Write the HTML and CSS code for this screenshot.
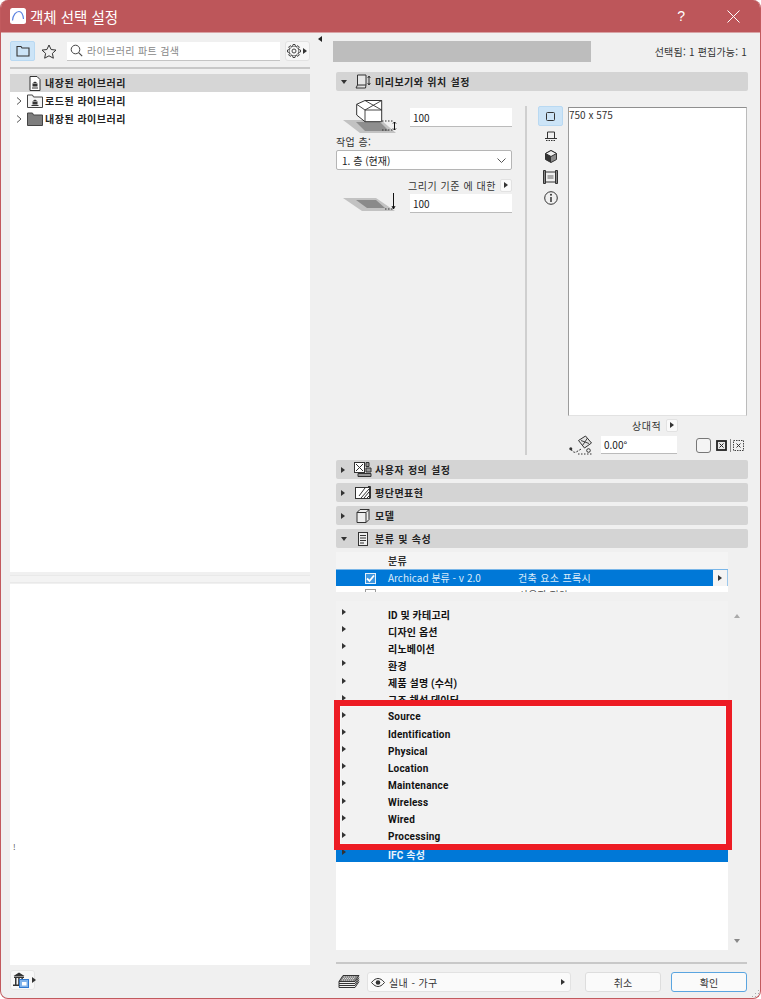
FILE: index.html
```html
<!DOCTYPE html>
<html lang="ko">
<head>
<meta charset="utf-8">
<title>객체 선택 설정</title>
<link rel="stylesheet" href="styles.css">
</head>
<body>
<div class="window">
  <header class="titlebar">
    <svg class="app-icon" width="16" height="16" viewBox="0 0 16 16"><rect width="16" height="16" rx="2.5" fill="#fff"/><path d="M2.500 12.500C3 7 6 3.500 9 3.500c2.500 0 4 3 4.500 7.500" fill="none" stroke="#5b82e0" stroke-width="1.200"/></svg>
    <span class="title">객체 선택 설정</span>
    <span class="help">?</span>
    <svg class="close" width="13" height="13" viewBox="0 0 13 13"><path d="M.5.500l12 12M12.500.500l-12 12" stroke="#fff" stroke-width="1"/></svg>
  </header>
  <i class="tri-left"></i>
  <div class="main">
    <aside class="left">
      <div class="toolbar">
        <span class="tool active">
          <svg width="14" height="12" viewBox="0 0 14 12"><path d="M1 1.500h4l1 1.500h7v8H1z" fill="none" stroke="#333" stroke-width="1.100"/></svg>
        </span>
        <span class="tool">
          <svg width="16" height="15" viewBox="0 0 16 15"><path d="M8 1l2.100 4.500 4.900.600-3.600 3.300.950 4.800L8 11.800l-4.350 2.400.950-4.800L1 6.100l4.900-.600z" fill="none" stroke="#333" stroke-width="1"/></svg>
        </span>
        <div class="search">
          <svg width="13" height="13" viewBox="0 0 13 13"><circle cx="5.500" cy="5.500" r="4.300" fill="none" stroke="#444" stroke-width="1"/><path d="M8.600 8.600l3.600 3.600" stroke="#444" stroke-width="1.100"/></svg>
          <span>라이브러리 파트 검색</span>
        </div>
        <span class="gear">
          <svg width="14" height="14" viewBox="-7 -7 14 14">
            <defs><path id="tooth" d="M-1.400-4.800L-1-6.500H1L1.400-4.800" fill="#f7f7f7" stroke="#333" stroke-width=".9"/></defs>
            <circle r="4.900" fill="#f7f7f7" stroke="#333" stroke-width=".9"/>
            <use href="#tooth"/><use href="#tooth" transform="rotate(45)"/><use href="#tooth" transform="rotate(90)"/><use href="#tooth" transform="rotate(135)"/><use href="#tooth" transform="rotate(180)"/><use href="#tooth" transform="rotate(225)"/><use href="#tooth" transform="rotate(270)"/><use href="#tooth" transform="rotate(315)"/>
            <circle r="2" fill="none" stroke="#333" stroke-width=".9"/>
          </svg>
          <i class="tri-right"></i>
        </span>
      </div>
      <div class="rule"></div>
      <div class="tree">
        <div class="tree-row selected">
          <span class="twist"></span>
          <svg width="12" height="15" viewBox="0 0 12 15"><path d="M1 .500h7l3 3v11H1z" fill="#fff" stroke="#333"/><path d="M3 11.500h6v1H3zM3.500 8h5v2.500h-5zM6 5.500l3 2H3z" fill="#333"/></svg>
          <span>내장된 라이브러리</span>
        </div>
        <div class="tree-row">
          <span class="twist"><svg width="6" height="8" viewBox="0 0 6 8"><path d="M1 .500L5 4 1 7.500" fill="none" stroke="#555"/></svg></span>
          <svg width="16" height="14" viewBox="0 0 16 14"><path d="M.500 1h5l1 2h9v10.500H.500z" fill="#f4f4f4" stroke="#444"/><path d="M4.500 11h7v1h-7zM5.500 8h5v2.500h-5zM8 5.500l3 2H5z" fill="#333"/></svg>
          <span>로드된 라이브러리</span>
        </div>
        <div class="tree-row">
          <span class="twist"><svg width="6" height="8" viewBox="0 0 6 8"><path d="M1 .500L5 4 1 7.500" fill="none" stroke="#555"/></svg></span>
          <svg width="16" height="14" viewBox="0 0 16 14"><path d="M.500 1h5l1 2h9v10.500H.500z" fill="#7e7e7e" stroke="#444"/></svg>
          <span>내장된 라이브러리</span>
        </div>
      </div>
      <div class="splitter"></div>
      <div class="lower-panel"><span class="stray">!</span></div>
      <div class="lib-bar">
        <span class="lib-button">
          <svg width="18" height="16" viewBox="0 0 18 16"><path d="M1 12.500h12V14H1zM2 4.500h10V6H2zM3 6h1.500v6.500H3zM6.200 6h1.500v6.500H6.200zM9.400 6h1.500v6.500H9.400zM7 .500l5.500 3.500h-11z" fill="#333"/><rect x="7.500" y="7.500" width="9" height="8" fill="#7fb2ea" stroke="#2f78d0"/><rect x="10" y="10" width="4.500" height="3.500" fill="#fff"/></svg>
          <i class="tri-right dark"></i>
        </span>
      </div>
    </aside>
    <section class="right">
      <div class="right-top">
        <div class="name-bar"></div>
        <span class="counts">선택됨: 1 편집가능: 1</span>
      </div>
      <div class="sec-head first">
        <i class="tri-down"></i>
        <svg width="16" height="15" viewBox="0 0 16 15"><path d="M2.500 1h8.500v10H2.500zM1 14l1.500-3M1 14h9.500l.5-3" fill="#e6e6e6" stroke="#333"/><path d="M14 2.500v8M12.700 4L14 2l1.300 2M12.700 9L14 11l1.300-2" fill="none" stroke="#333"/></svg>
        <span>미리보기와 위치 설정</span>
      </div>
      <div class="preview">
        <div class="settings">
          <div class="field-row first-row">
            <svg class="plan" width="56" height="34" viewBox="0 0 56 34"><path d="M0 20h38l15 13H17z" fill="#c2c2c2"/><path d="M13 22h24l9 9H22z" fill="#8e8e8e"/><path d="M13.700 4.300L22 .500h16.700v21.200H22L13.700 15z" fill="#fff" stroke="#333"/><path d="M13.700 4.300L22 10h16.700M22 10v11.700M38.700.500L22 10M22 .500l16.700 9.500" fill="none" stroke="#333" stroke-width=".9"/><path d="M39 21h12M39 30h12" fill="none" stroke="#333" stroke-dasharray="1.500 1.500"/><path d="M51.500 22v8M50 23.500l1.500-1.500 1.500 1.500M50 28.500l1.500 1.500 1.500-1.500" fill="none" stroke="#111"/></svg>
            <div class="input">100</div>
          </div>
          <div class="label">작업 층:</div>
          <div class="select"><span>1. 층 (현재)</span><svg width="9" height="5" viewBox="0 0 9 5"><path d="M.500.500L4.500 4.500 8.500.500" fill="none" stroke="#555"/></svg></div>
          <div class="label-right"><span>그리기 기준 에 대한</span><span class="mini-btn"><i class="tri-right dark"></i></span></div>
          <div class="field-row second-row">
            <svg class="plan" width="56" height="20" viewBox="0 0 56 20"><path d="M0 5h33l19 13H19z" fill="#c2c2c2"/><path d="M13 7h20l9 8H24z" fill="#8a8a8a"/><path d="M42 16h8" stroke="#333" stroke-dasharray="1.500 1.500"/><path d="M50.500 0v15M49 13l1.500 3 1.500-3" fill="none" stroke="#111"/></svg>
            <div class="input">100</div>
          </div>
        </div>
        <div class="v-rule"></div>
        <div class="view-tabs">
          <span class="view-tab active"><svg width="9" height="9" viewBox="0 0 9 9"><rect x=".5" y=".5" width="8" height="8" rx="1" fill="none" stroke="#333"/></svg></span>
          <span class="view-tab"><svg width="12" height="12" viewBox="0 0 12 12"><path d="M2.500 8V2h7v6M0 8.500h12" fill="none" stroke="#333"/><path d="M1 10.500h10" stroke="#333" stroke-dasharray="1.500 1"/></svg></span>
          <span class="view-tab"><svg width="12" height="13" viewBox="0 0 12 13"><path d="M6 .500l5.500 3v6L6 12.500.500 9.500v-6z" fill="#8a8a8a" stroke="#333"/><path d="M6 .500l5.500 3L6 6.500.500 3.500z" fill="#eee" stroke="#333"/><path d="M.500 3.500L6 6.500v6L.500 9.500z" fill="#333"/></svg></span>
          <span class="view-tab"><svg width="15" height="14" viewBox="0 0 15 14"><path d="M.500.500h2v13h-2zM12.500.500h2v13h-2zM2.500 2h10M2.500 12h10" fill="#888" stroke="#333"/><rect x="4.500" y="5" width="6" height="4" fill="#aaa"/></svg></span>
          <span class="view-tab"><svg width="14" height="14" viewBox="0 0 14 14"><circle cx="7" cy="7" r="6.300" fill="none" stroke="#333"/><path d="M7 6v5" stroke="#333" stroke-width="1.500"/><circle cx="7" cy="3.800" r="1" fill="#333"/></svg></span>
        </div>
        <div class="view-col">
          <div class="view-box">750 x 575</div>
          <div class="label-right relative"><span>상대적</span><span class="mini-btn"><i class="tri-right dark"></i></span></div>
          <div class="angle-row">
            <svg width="24" height="20" viewBox="0 0 24 20"><path d="M9.500 5.500L16.500 1l6 7-7 5z" fill="#e4e4e4" stroke="#333"/><path d="M12 5.500l8 3M18.500 3l-5 7.500" stroke="#333" stroke-width=".9"/><path d="M2 14.500c2 3 4 3.500 6 2l5-3" fill="none" stroke="#333" stroke-dasharray="2 1.300"/><circle cx="1.800" cy="13.800" r="1.500" fill="#333"/><path d="M9 19h14" stroke="#333" stroke-dasharray="1.500 1.500"/><circle cx="19.500" cy="15.500" r="1.800" fill="none" stroke="#333"/></svg>
            <div class="input angle">0.00°</div>
            <span class="check-empty"></span>
            <svg class="anchor" width="11" height="11" viewBox="0 0 11 11"><rect x="1" y="1" width="9" height="9" fill="#e8e8e8" stroke="#222" stroke-width="1.800"/><path d="M3.500 3.500l4 4M7.500 3.500l-4 4" stroke="#222"/></svg>
            <span class="bar"></span>
            <svg width="11" height="11" viewBox="0 0 11 11"><rect x=".5" y=".5" width="10" height="10" fill="none" stroke="#444" stroke-dasharray="1.500 1"/><path d="M3.500 3.500l4 4M7.500 3.500l-4 4" stroke="#333"/></svg>
          </div>
        </div>
      </div>
      <div class="sec-head">
        <i class="tri-right dark"></i>
        <svg width="18" height="15" viewBox="0 0 18 15"><rect x=".5" y=".5" width="10" height="10" fill="#fff" stroke="#333"/><path d="M2 2l7 7M9 2l-7 7" stroke="#333"/><path d="M12 .500h3v4h-3zM12 6h5v4h-5zM4 11.500h13v3H4z" fill="#999" stroke="#333"/></svg>
        <span>사용자 정의 설정</span>
      </div>
      <div class="sec-head">
        <i class="tri-right dark"></i>
        <svg width="16" height="13" viewBox="0 0 16 13"><rect x=".5" y="1.500" width="14" height="11" fill="#fff" stroke="#333"/><path d="M6 12l8-9M9 12l5-6M12 12l2-2M4 10l6-8" stroke="#333"/><path d="M13 .500h2.500v12" fill="none" stroke="#333"/></svg>
        <span>평단면표현</span>
      </div>
      <div class="sec-head">
        <i class="tri-right dark"></i>
        <svg width="14" height="14" viewBox="0 0 14 14"><path d="M1 3.500l3-3h9v10l-3 3H1zM1 3.500h9v10M10 3.500l3-3" fill="#eee" stroke="#333"/></svg>
        <span>모델</span>
      </div>
      <div class="sec-head">
        <i class="tri-down"></i>
        <svg width="10" height="14" viewBox="0 0 10 14"><rect x=".5" y=".5" width="9" height="13" fill="#eee" stroke="#333"/><path d="M2 3.500h6M2 6h6M2 8.500h6M2 11h4" stroke="#333"/></svg>
        <span>분류 및 속성</span>
      </div>
      <div class="class-table">
        <div class="class-head">분류</div>
        <div class="class-row">
          <span class="checkbox"><svg width="11" height="11" viewBox="0 0 11 11"><rect x=".5" y=".5" width="10" height="10" fill="#3f97e0" stroke="#e6f1fb"/><path d="M2 5.500l2.500 2.500L9 2.500" fill="none" stroke="#fff" stroke-width="1.800"/></svg></span>
          <span class="class-name">Archicad 분류 - v 2.0</span>
          <span class="class-value">건축 요소 프록시</span>
          <span class="row-btn"><i class="tri-right dark"></i></span>
        </div>
        <div class="class-clip"><span class="box-clip"></span><span class="text-clip">사용자 정의</span></div>
      </div>
      <div class="prop-area">
        <div class="prop-list">
          <div class="prop-group">
            <div class="prop"><i class="tri-right dark"></i><span>ID 및 카테고리</span></div>
            <div class="prop"><i class="tri-right dark"></i><span>디자인 옵션</span></div>
            <div class="prop"><i class="tri-right dark"></i><span>리노베이션</span></div>
            <div class="prop"><i class="tri-right dark"></i><span>환경</span></div>
            <div class="prop"><i class="tri-right dark"></i><span>제품 설명 (수식)</span></div>
            <div class="prop"><i class="tri-right dark"></i><span>구조 해석 데이터</span></div>
            <div class="prop"><i class="tri-right dark"></i><span>Source</span></div>
            <div class="prop"><i class="tri-right dark"></i><span>Identification</span></div>
            <div class="prop"><i class="tri-right dark"></i><span>Physical</span></div>
            <div class="prop"><i class="tri-right dark"></i><span>Location</span></div>
            <div class="prop"><i class="tri-right dark"></i><span>Maintenance</span></div>
            <div class="prop"><i class="tri-right dark"></i><span>Wireless</span></div>
            <div class="prop"><i class="tri-right dark"></i><span>Wired</span></div>
            <div class="prop"><i class="tri-right dark"></i><span>Processing</span></div>
            <div class="prop current"><i class="tri-right dark"></i><span>IFC 속성</span></div>
          </div>
        </div>
        <div class="scroll">
          <i class="tri-up"></i>
          <i class="tri-down grey"></i>
        </div>
      </div>
      <div class="rule bottom-rule"></div>
      <div class="footer">
        <svg width="22" height="14" viewBox="0 0 22 14"><path d="M5 .500h16l-4 6H1z" fill="#888" stroke="#333"/><path d="M1 6.500v2l16 0 4-6M1 8.500v2h16l4-6M1 10.500v2h16l4-6" fill="none" stroke="#333"/><path d="M6 2h11M5 3.500h11M4 5h11" stroke="#ddd" stroke-dasharray="1 1"/></svg>
        <div class="layer-select">
          <svg width="14" height="9" viewBox="0 0 14 9"><path d="M.500 4.500C3 1.500 5 .500 7 .500s4 1 6.500 4C11 7.500 9 8.500 7 8.500s-4-1-6.500-4z" fill="none" stroke="#333"/><circle cx="7" cy="4.500" r="2.300" fill="#333"/></svg>
          <span>실내 - 가구</span>
          <i class="tri-right dark"></i>
        </div>
        <button class="btn">취소</button>
        <button class="btn primary">확인</button>
      </div>
    </section>
  </div>
  <div class="highlight"></div>
  <svg class="grip" width="10" height="10" viewBox="0 0 10 10"><path d="M8 2h1v1H8zM5 5h1v1H5zM8 5h1v1H8zM2 8h1v1H2zM5 8h1v1H5zM8 8h1v1H8z" fill="#aaa"/></svg>
</div>
</body>
</html>
```

FILE: styles.css
```css
* { box-sizing: border-box; }
html, body { margin: 0; padding: 0; background: #fff; }
body {
  width: 761px; height: 999px; overflow: hidden;
  font-family: "Noto Sans CJK KR", "Noto Sans", sans-serif;
  font-size: 10px; color: #222;
}
i { display: inline-block; flex: none; }
svg { flex: none; display: block; }

.window {
  position: relative; width: 761px; height: 999px;
  background: #f0f0f0; border: 1px solid #c25a5e; border-top: 0;
  border-radius: 8px; overflow: hidden;
}
.titlebar {
  height: 33px; background: #bd565a; color: #fff;
  display: flex; align-items: center; padding: 0 20px 0 9px;
  border-bottom: 1px solid #d9a3a5;
}
.title { font-size: 14.500px; margin-left: 4px; flex: 1; }
.help { font-size: 14px; margin-right: 42px; font-family: "Liberation Sans", sans-serif; }
.tri-left {
  position: absolute; left: 317px; top: 36px; width: 0; height: 0;
  border-right: 4px solid #222; border-top: 3px solid transparent; border-bottom: 3px solid transparent;
}

.main { display: flex; height: 965px; }

.left { width: 300px; margin-left: 9px; display: flex; flex-direction: column; flex: none; }
.toolbar { display: flex; align-items: center; height: 20px; margin-top: 8px; }
.tool { width: 25px; height: 20px; display: flex; align-items: center; justify-content: center; border-radius: 2px; }
.tool.active { background: #cce4f7; border: 1px solid #b9d9f2; }
.tool + .tool { margin-left: 1px; }
.search {
  margin-left: 6px; width: 213px; height: 19px; background: #fff; border-bottom: 1px solid #c4c4c4;
  display: flex; align-items: center; gap: 4px; padding-left: 3px; color: #888; font-size: 10px;
  letter-spacing: .35px;
}
.gear {
  margin-left: 5px; width: 25px; height: 20px; display: flex; align-items: center; gap: 2px; padding-left: 1px;
  background: #f7f7f7; border: 1px solid #e2e2e2; border-radius: 3px;
}
.rule { height: 2px; background: #c8c8c8; }
.left .rule { margin-top: 6px; height: 1.500px; }
.tree { height: 498px; margin-top: 5.500px; background: #fff; }
.tree-row {
  height: 18px; display: flex; align-items: center; font-weight: 700; font-size: 10px; letter-spacing: .5px; color: #222;
  padding-bottom: 2px;
}
.tree-row svg { position: relative; top: 1px; }
.tree-row.selected { background: #d6d6d6; }
.tree-row svg + span { margin-left: 2px; }
.tree-row:first-child svg { margin: 0 2px 0 2px; }
.twist { width: 17px; padding-left: 6px; flex: none; }
.splitter { height: 12px; background: linear-gradient(#f0f0f0 0 3px, #e9e9e9 3px 4px, #f3f3f3 4px 10px, #e9e9e9 10px 11px, #f0f0f0 11px); }
.lower-panel { height: 381px; background: #fff; position: relative; }
.stray { position: absolute; left: 3px; top: 257px; font-size: 8px; color: #555; }
.lib-bar { padding-top: 5px; }
.lib-button {
  width: 25px; height: 20px; display: flex; align-items: center; gap: 2px; padding-left: 1px;
  background: #f7f7f7; border: 1px solid #e5e5e5; border-radius: 3px;
}

.tri-right { width: 0; height: 0; border-left: 4px solid #333; border-top: 3px solid transparent; border-bottom: 3px solid transparent; }
.tri-right.dark { border-left-color: #333; }
.tri-down { width: 0; height: 0; border-top: 4px solid #333; border-left: 3.500px solid transparent; border-right: 3.500px solid transparent; }
.tri-down.grey { border-top-color: #888; }
.tri-up { width: 0; height: 0; border-bottom: 4px solid #aaa; border-left: 3.500px solid transparent; border-right: 3.500px solid transparent; }

.right { margin-left: 21px; width: 416px; flex: none; display: flex; flex-direction: column; }
.right-top { display: flex; align-items: center; height: 21px; margin-top: 8px; padding-left: 2px; }
.name-bar { width: 258px; height: 21px; background: #bdbdbd; }
.counts { margin-left: auto; font-size: 10px; color: #333; letter-spacing: .2px; }

.sec-head {
  margin: 4px 0 0 5px; width: 412px; height: 19px; background: #d4d4d4; border-radius: 2px;
  display: grid; grid-template-columns: 13px 18px 1fr; align-items: center; justify-items: center;
  font-weight: 700; color: #222; font-size: 10px; letter-spacing: .5px; word-spacing: .5px;
  padding-left: 5px;
}
.sec-head i { justify-self: start; }
.sec-head span { justify-self: start; margin-left: 3px; padding-bottom: 1px; }
.sec-head.first { margin-top: 10px; }

.preview { margin-left: 5px; width: 412px; height: 365px; display: flex; }
.settings { width: 176px; flex: none; }
.field-row { display: flex; align-items: flex-start; }
.first-row { margin-top: 9px; height: 32px; }
.plan { margin-left: 7px; }
.first-row .input { margin-left: 11px; margin-top: 8px; }
.input { width: 102px; height: 19px; background: #fff; border-bottom: 1px solid #bbb; padding-left: 3px; line-height: 20px; font-size: 10px; }
.label { margin-top: 2px; height: 16px; line-height: 16px; color: #333; font-size: 10px; letter-spacing: .4px; }
.select {
  height: 20px; width: 176px; background: #fff; border: 1px solid #b5b5b5; border-radius: 2px;
  display: flex; align-items: center; justify-content: space-between; padding: 0 5px; font-size: 10px;
}
.label-right { display: flex; align-items: center; justify-content: flex-end; gap: 4px; height: 14px; margin-top: 8px; color: #333; letter-spacing: .55px; }
.mini-btn { width: 12px; height: 13px; display: flex; align-items: center; justify-content: center; background: #fafafa; border: 1px solid #e2e2e2; border-radius: 2px; }
.second-row { margin-top: 2px; height: 19px; }
.second-row .plan { margin-top: -1px; }
.second-row .input { margin-left: 11px; }
.v-rule { width: 2px; height: 349px; background: #cfcfcf; margin: 15px 0 0 13px; flex: none; }
.view-tabs { width: 25px; margin: 15px 0 0 11px; display: flex; flex-direction: column; flex: none; }
.view-tab { height: 20.500px; display: flex; align-items: center; justify-content: center; border-radius: 2px; }
.view-tab.active { background: #cce4f7; border: 1px solid #b9d9f2; height: 20px; }
.view-col { margin-left: 5px; width: 179px; flex: none; }
.view-box {
  margin-top: 16px; height: 309px; background: #fff; border: 1px solid #9c9c9c; border-top-color: #8f8f8f;
  border-right-color: #bbb; border-bottom-color: #e2e2e2; line-height: 13px; font-size: 10px; color: #333;
}
.label-right.relative { margin-top: 2px; justify-content: flex-start; padding-left: 64px; gap: 5px; }
.angle-row { display: flex; align-items: center; margin-top: 3px; height: 20px; }
.angle-row > svg:first-child { margin-left: 1px; }
.input.angle { width: 76px; margin-left: 8px; height: 18px; line-height: 18px; }
.check-empty { width: 15px; height: 15px; border: 1px solid #777; border-radius: 3px; margin-left: 19px; background: #f4f4f4; }
.anchor { margin-left: 5px; }
.bar { width: 1px; height: 13px; background: #888; margin: 0 2px 0 3px; }

.class-table { margin: 4px 0 0 5px; width: 392px; height: 40px; background: #f4f4f4; overflow: hidden; }
.class-head { height: 17px; padding-left: 52px; font-weight: 700; line-height: 18px; color: #333; letter-spacing: .3px; }
.class-row {
  height: 17px; background: #0078d7; color: #dcecfa; display: flex; align-items: center; border-top: 1px solid #7ab6e8;
}
.checkbox { width: 11px; margin-left: 29px; }
.class-name { margin-left: 12px; width: 130px; padding-bottom: 1px; }
.class-value { letter-spacing: .35px; padding-bottom: 1px; }
.row-btn { margin-left: auto; width: 15px; height: 16px; background: #f4f4f4; border-right: 1px solid #9cc8ec; display: flex; align-items: center; justify-content: center; }
.class-clip { height: 6px; background: #fff; position: relative; overflow: hidden; }
.box-clip { position: absolute; left: 29px; top: 3px; width: 11px; height: 11px; border: 1px solid #999; }
.text-clip { position: absolute; left: 183px; top: 1px; font-size: 10px; color: #555; }

.prop-area { margin: 9px 0 0 5px; width: 412px; height: 349px; display: flex; }
.prop-list { width: 392px; background: #fff; flex: none; }
.prop-group { background: #f2f2f2; padding-top: 4.500px; height: 261px; overflow: hidden; }
.prop {
  height: 17.150px; display: flex; align-items: center; font-weight: 700; font-size: 10px; color: #111; padding-left: 6px; letter-spacing: .2px;
  font-family: Roboto, "Noto Sans CJK KR", sans-serif;
}
.prop i { margin-top: -4px; }
.prop span { margin-left: 42px; }
.prop.current { background: #0078d7; color: #eaf4fc; }
.scroll { flex: 1; position: relative; }
.scroll .tri-up { position: absolute; left: 6px; top: 13px; }
.scroll .tri-down { position: absolute; left: 6px; top: 338px; }

.bottom-rule { margin: 12px 0 0 5px; width: 411px; }
.footer { margin: 8px 0 0 5px; width: 412px; height: 20px; display: flex; align-items: center; }
.footer > svg { margin-left: 2px; }
.layer-select {
  margin-left: 7px; width: 204px; height: 20px; background: #fafafa; border: 1px solid #e2e2e2; border-radius: 3px;
  display: flex; align-items: center; padding: 0 5px 0 3px; gap: 4px; color: #333; font-size: 10px; letter-spacing: .4px;
}
.layer-select i { margin-left: auto; }
.btn {
  width: 76px; height: 20px; margin-left: 14px; padding: 0; background: #fafafa; border: 1px solid #ddd; border-radius: 3px;
  font: inherit; font-size: 10px; color: #333;
}
.btn + .btn { margin-left: 10px; }
.btn.primary { border-color: #5aa5e0; }

.highlight {
  position: absolute; left: 333px; top: 700px; width: 398px; height: 150px;
  border: 6px solid #ed1c24; outline: 1px solid #f7f7f7; outline-offset: -7px;
}
.grip { position: absolute; right: 0; bottom: 0; }
```
